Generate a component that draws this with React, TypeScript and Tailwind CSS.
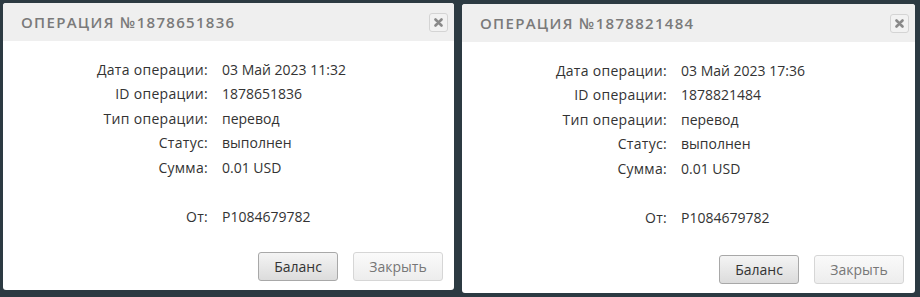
import React from 'react';

type Op = {
  id: string;
  date: string;
};

const ops: Op[] = [
  { id: '1878651836', date: '03 Май 2023 11:32' },
  { id: '1878821484', date: '03 Май 2023 17:36' },
];

const font = { fontFamily: '"Open Sans", "Noto Sans", sans-serif' };

const OperationPanel: React.FC<{ op: Op; className?: string }> = ({ op, className }) => {
  const rows: [string, string][] = [
    ['Дата операции:', op.date],
    ['ID операции:', op.id],
    ['Тип операции:', 'перевод'],
    ['Статус:', 'выполнен'],
    ['Сумма:', '0.01 USD'],
    ['', ''],
    ['От:', 'P1084679782'],
  ];

  return (
    <div className={`flex flex-col bg-white rounded-[3px] overflow-hidden ${className ?? ''}`}>
      <div className="h-[38px] bg-[#efefef] flex items-center justify-between pl-[18px] pr-[6px]">
        <h3 className="text-[15px] tracking-[1.3px] text-[#7a7a7a] font-semibold uppercase">
          Операция №{op.id}
        </h3>
        <button className="w-[19px] h-[19px] rounded-[3px] border border-[#d4d4d4] bg-[#f2f2f2] flex items-center justify-center text-[#8a8a8a]">
          <svg width="9" height="9" viewBox="0 0 9 9">
            <path d="M1.5 1.5 L7.5 7.5 M7.5 1.5 L1.5 7.5" stroke="currentColor" strokeWidth="2.6" strokeLinecap="round" />
          </svg>
        </button>
      </div>

      <div className="grid grid-cols-[205px_1fr] gap-x-[14px] pt-[16px] text-[14px] text-[#333]">
        {rows.map(([label, value], i) => (
          <React.Fragment key={i}>
            <div className="h-[24.5px] flex items-center justify-end tracking-[0.3px]">{label}</div>
            <div className="h-[24.5px] flex items-center">{value}</div>
          </React.Fragment>
        ))}
      </div>

      <div className="mt-auto flex justify-end gap-[15px] pr-[11px] pb-[9px]">
        <button className="w-[80px] h-[29px] rounded-[3px] border border-[#a8a8a8] bg-gradient-to-b from-[#f4f4f4] to-[#dcdcdc] text-[14px] text-[#333]">
          Баланс
        </button>
        <button className="w-[90px] h-[29px] rounded-[3px] border border-[#d6d6d6] bg-gradient-to-b from-[#fafafa] to-[#ededed] text-[14px] text-[#777]">
          Закрыть
        </button>
      </div>
    </div>
  );
};

const App: React.FC = () => {
  return (
    <div className="w-[920px] h-[297px] bg-[#2c3a42] flex items-start pl-[3px] pt-[3px] gap-[8px]" style={font}>
      <OperationPanel op={ops[0]} className="w-[451px] h-[287px]" />
      <OperationPanel op={ops[1]} className="w-[453px] h-[289px] mt-[1px]" />
    </div>
  );
};

export default App;
